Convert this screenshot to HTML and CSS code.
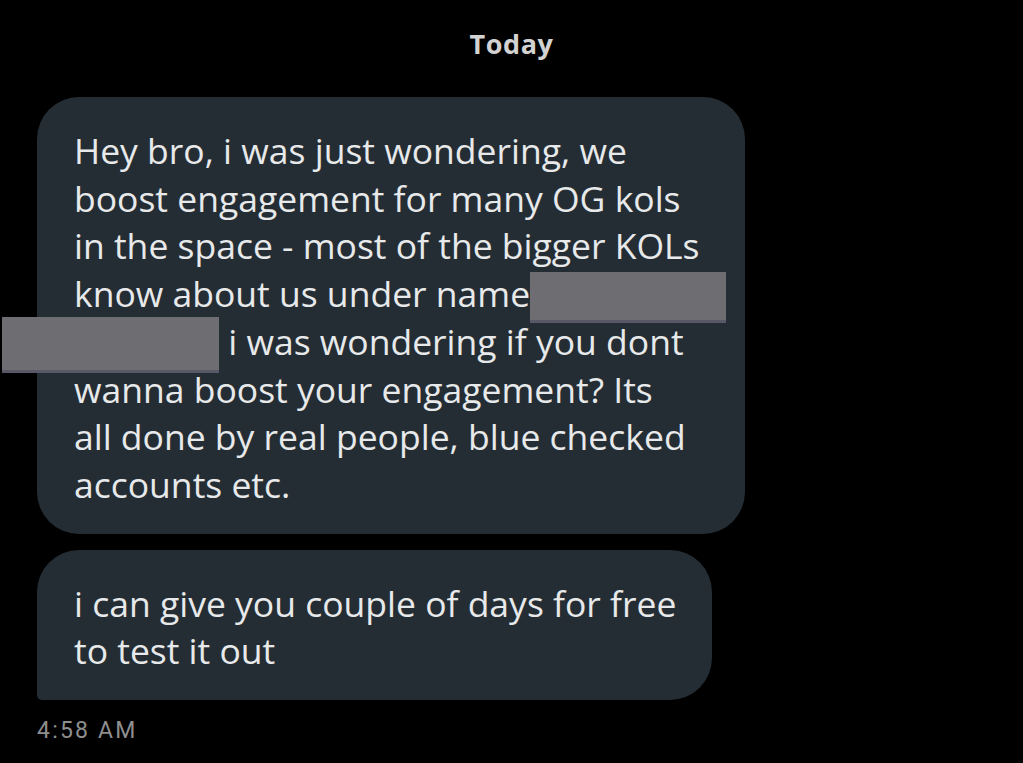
FILE: index.html
```html
<!DOCTYPE html>
<html>
<head>
    <title>Messages</title>
    <meta charset="utf-8">
    <meta name="viewport" content="width=device-width, initial-scale=1">
    <link rel="stylesheet" href="styles.css">
</head>

<body>

    <div class="thread">
        <div class="day">Today</div>

        <div class="bubble first">
            Hey bro, i was just wondering, we<br>
            boost engagement for many OG kols<br>
            in the space - most of the bigger KOLs<br>
            know about us under name <span class="redact r1"></span><br>
            <span class="redact r2"></span> i was wondering if you dont<br>
            wanna boost your engagement? Its<br>
            all done by real people, blue checked<br>
            accounts etc.
        </div>

        <div class="bubble last">
            i can give you couple of days for free<br>
            to test it out
        </div>

        <div class="time">4:58 AM</div>
    </div>

</body>
</html>
```

FILE: styles.css
```css
body {
    margin: 0;
    background-color: #000;
    font-family: "Open Sans", "Noto Sans", sans-serif;
}

.thread {
    width: 1023px;
    height: 763px;
    padding: 26px 0 0 37px;
    box-sizing: border-box;
    overflow: hidden;
}

.day {
    margin-left: -37px;
    text-align: center;
    color: #d2d2d2;
    font-size: 27px;
    font-weight: 700;
    letter-spacing: 0.6px;
    line-height: 36px;
    margin-bottom: 35px;
}

.bubble {
    background-color: #252d34;
    color: #e7e9ea;
    font-size: 35.5px;
    line-height: 47.7px;
    padding: 30px 37px 25px 37px;
    border-radius: 42px;
    white-space: nowrap;
    box-sizing: border-box;
}

.bubble.first {
    width: 708px;
}

.bubble.last {
    width: 675px;
    margin-top: 16px;
    border-bottom-left-radius: 5px;
}

.redact {
    display: inline-block;
    vertical-align: middle;
    background-color: #6e6d71;
    border-bottom: 3px solid #585868;
    box-sizing: border-box;
}

.r1 {
    width: 196px;
    height: 51px;
    margin: -12px 0 -12px -9px;
}

.r2 {
    width: 217px;
    height: 56px;
    margin: -12px 0 -12px -72px;
}

.time {
    margin-top: 18px;
    color: #8e8e8e;
    font-family: Roboto, sans-serif;
    font-size: 23px;
    letter-spacing: 2.2px;
    line-height: 26px;
}
```
